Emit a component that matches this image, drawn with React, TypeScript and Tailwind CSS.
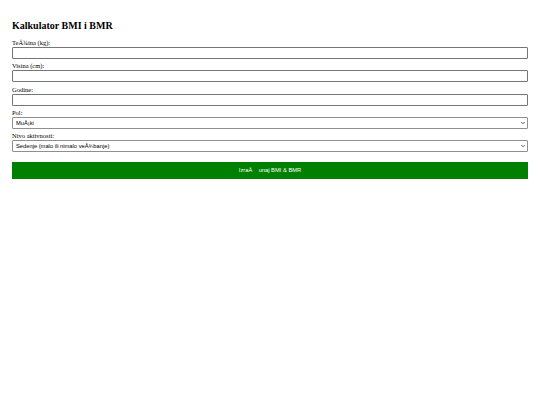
import React from "react";

const fieldLabel = "block text-[6.5px] leading-[8px] text-black";
const inputBox =
  "block w-full h-[12px] border border-[#767676] bg-white rounded-[1px] px-[1px] text-[6px] font-['Liberation_Sans',Arial,sans-serif]";
const selectBox =
  "block w-full h-[12px] appearance-none border border-[#8f8f8f] bg-white rounded-[1px] pl-[3px] pr-[10px] text-[5.75px] leading-[10px] text-black font-['Liberation_Sans',Arial,sans-serif]";

function Chevron() {
  return (
    <svg
      viewBox="0 0 8 6"
      className="pointer-events-none absolute right-[3px] top-1/2 h-[3px] w-[4px] -translate-y-1/2 text-[#444]"
      fill="none"
      stroke="currentColor"
      strokeWidth="1.8"
      strokeLinecap="round"
      strokeLinejoin="round"
    >
      <path d="M1 1.5 4 4.5 7 1.5" />
    </svg>
  );
}

export default function App() {
  return (
    <div className="min-h-[405px] w-[540px] bg-white px-3 pt-[20px] font-['Liberation_Serif','Times_New_Roman',serif] text-black">
      <h1 className="text-[10px] font-bold leading-[12px] mb-[7px]">Kalkulator BMI i BMR</h1>

      <form className="flex flex-col">
        <div className="mb-[3.33px]">
          <label htmlFor="tezina" className={fieldLabel}>
            TeÅ¾ina (kg):
          </label>
          <input id="tezina" type="number" className={inputBox} />
        </div>

        <div className="mb-[3.33px]">
          <label htmlFor="visina" className={fieldLabel}>
            Visina (cm):
          </label>
          <input id="visina" type="number" className={inputBox} />
        </div>

        <div className="mb-[3.33px]">
          <label htmlFor="godine" className={fieldLabel}>
            Godine:
          </label>
          <input id="godine" type="number" className={inputBox} />
        </div>

        <div className="mb-[3.33px]">
          <label htmlFor="pol" className={fieldLabel}>
            Pol:
          </label>
          <div className="relative">
            <select id="pol" className={selectBox} defaultValue="m">
              <option value="m">MuÅ¡ki</option>
              <option value="z">Å½enski</option>
            </select>
            <Chevron />
          </div>
        </div>

        <div>
          <label htmlFor="aktivnost" className={fieldLabel}>
            Nivo aktivnosti:
          </label>
          <div className="relative">
            <select id="aktivnost" className={selectBox} defaultValue="1.2">
              <option value="1.2">Sedenje (malo ili nimalo veÅ¾banje)</option>
              <option value="1.375">Lagana aktivnost</option>
              <option value="1.55">Umerena aktivnost</option>
              <option value="1.725">Visoka aktivnost</option>
            </select>
            <Chevron />
          </div>
        </div>

        <button
          type="button"
          className="mt-[9.5px] h-[17px] w-full bg-[#008000] text-[5.75px] text-white whitespace-pre font-['Liberation_Sans',Arial,sans-serif]"
        >
          {"IzraÄ    unaj BMI & BMR"}
        </button>
      </form>
    </div>
  );
}
